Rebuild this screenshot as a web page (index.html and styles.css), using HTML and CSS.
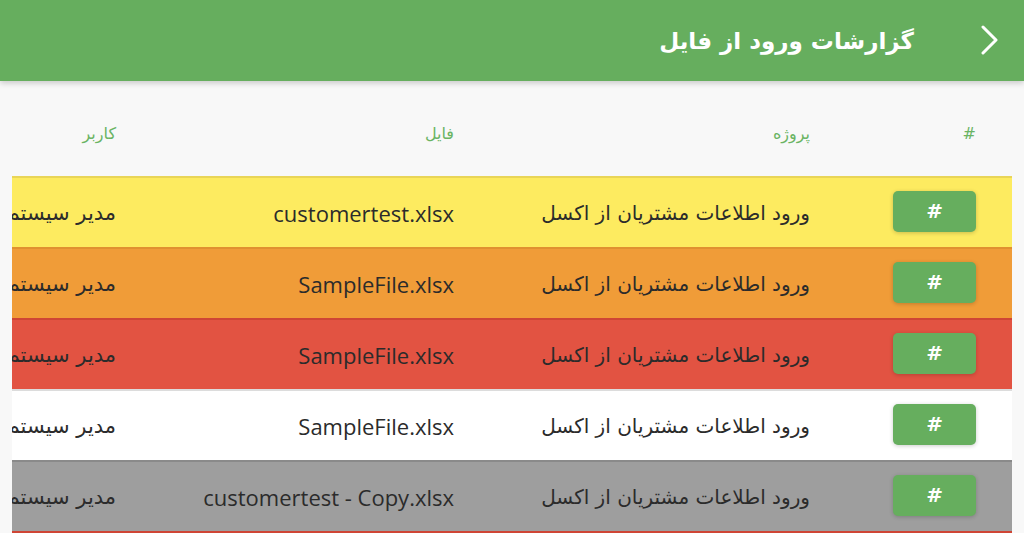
FILE: index.html
```html
<!DOCTYPE html>
<html lang="fa" dir="rtl">
<head>
<meta charset="utf-8">
<link rel="stylesheet" href="styles.css">
</head>
<body>
<header class="topbar">
  <button class="back" aria-label="بازگشت">
    <svg width="18" height="30" viewBox="0 0 18 30"><path d="M2 2 L15 15 L2 28" fill="none" stroke="#fff" stroke-width="3" stroke-linecap="round" stroke-linejoin="round"/></svg>
  </button>
  <h1 class="title">گزارشات ورود از فایل</h1>
</header>
<main class="content">
  <div class="scroller">
    <table class="grid">
      <colgroup>
        <col class="c-id"><col class="c-proj"><col class="c-file"><col class="c-user">
      </colgroup>
      <thead>
        <tr><th>#</th><th>پروژه</th><th>فایل</th><th>کاربر</th></tr>
      </thead>
      <tbody>
        <tr class="r-yellow"><td><span class="btn">#</span></td><td>ورود اطلاعات مشتریان از اکسل</td><td class="ltr">customertest.xlsx</td><td class="user">مدیر سیستم</td></tr>
        <tr class="r-orange"><td><span class="btn">#</span></td><td>ورود اطلاعات مشتریان از اکسل</td><td class="ltr">SampleFile.xlsx</td><td class="user">مدیر سیستم</td></tr>
        <tr class="r-red"><td><span class="btn">#</span></td><td>ورود اطلاعات مشتریان از اکسل</td><td class="ltr">SampleFile.xlsx</td><td class="user">مدیر سیستم</td></tr>
        <tr class="r-white"><td><span class="btn">#</span></td><td>ورود اطلاعات مشتریان از اکسل</td><td class="ltr">SampleFile.xlsx</td><td class="user">مدیر سیستم</td></tr>
        <tr class="r-gray"><td><span class="btn">#</span></td><td>ورود اطلاعات مشتریان از اکسل</td><td class="ltr">customertest - Copy.xlsx</td><td class="user">مدیر سیستم</td></tr>
        <tr class="r-red"><td><span class="btn">#</span></td><td>ورود اطلاعات مشتریان از اکسل</td><td class="ltr">SampleFile.xlsx</td><td class="user">مدیر سیستم</td></tr>
      </tbody>
    </table>
  </div>
</main>
</body>
</html>
```
FILE: styles.css
```css
* { box-sizing: border-box; }
html, body { margin: 0; padding: 0; }
body {
  background: #f8f8f8;
  font-family: "Open Sans", "DejaVu Sans", sans-serif;
  color: #2b2b2b;
  overflow: hidden;
  height: 533px;
}
.topbar {
  height: 81px;
  background: #66ae5e;
  display: flex;
  align-items: center;
  padding: 0 25px 0 0;
  gap: 67px;
  box-shadow: 0 2px 6px rgba(0,0,0,0.2);
  position: relative;
  z-index: 2;
}
.back {
  background: none;
  border: 0;
  padding: 0;
  width: 18px;
  height: 30px;
  display: flex;
  margin-top: -2px;
}
.title {
  margin: 0;
  color: #fff;
  font-size: 23px;
  font-weight: bold;
  font-family: "DejaVu Sans", sans-serif;
}
.content {
  padding: 0 12px;
}
.scroller {
  overflow: hidden;
  width: 1000px;
}
.grid {
  border-collapse: collapse;
  table-layout: fixed;
  width: 1160px;
}
.c-id { width: 166px; }
.c-proj { width: 356px; }
.c-file { width: 338px; }
.c-user { width: 300px; }
.grid th {
  height: 95px;
  padding: 8px 36px 0 0;
  text-align: right;
  font-weight: normal;
  font-size: 16px;
  color: #6ab463;
  font-family: "DejaVu Sans", sans-serif;
  vertical-align: middle;
}
.grid td {
  height: 71px;
  padding: 0 36px 0 0;
  text-align: right;
  font-size: 20px;
  font-family: "DejaVu Sans", sans-serif;
  vertical-align: middle;
  white-space: nowrap;
}
.grid td.ltr {
  font-family: "Open Sans", sans-serif;
  font-size: 22px;
}
.grid td.user {
  font-size: 21px;
}
.grid tr { border-top: 2px solid transparent; }
.btn {
  display: inline-flex;
  align-items: center;
  justify-content: center;
  width: 83px;
  height: 41px;
  margin-top: -3px;
  background: #66ae5e;
  color: #fff;
  font-weight: bold;
  font-size: 20px;
  border-radius: 5px;
  box-shadow: 0 1px 4px rgba(0,0,0,0.2);
  font-family: "DejaVu Sans", sans-serif;
  vertical-align: middle;
}
.r-yellow { background: #fdeb60; border-top-color: #e9d558 !important; }
.r-orange { background: #f09c38; border-top-color: #e0902f !important; }
.r-red { background: #e25342; border-top-color: #cf4535 !important; }
.r-white { background: #ffffff; border-top-color: #dcdcdc !important; }
.r-gray { background: #9e9e9e; border-top-color: #8a8a8a !important; }
```
